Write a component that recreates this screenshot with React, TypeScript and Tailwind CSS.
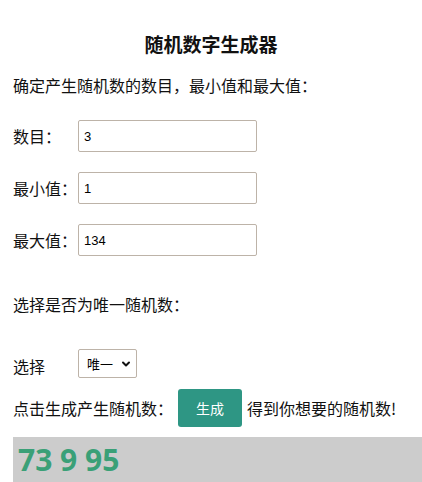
import { ChevronDown } from 'lucide-react';

const fields = [
  { label: '数目：', value: '3' },
  { label: '最小值：', value: '1' },
  { label: '最大值：', value: '134' },
];

export default function App() {
  return (
    <div className="min-h-[482px] overflow-hidden bg-white px-[13px] text-[16px] text-[#111] [font-family:'Noto_Sans_CJK_SC',sans-serif]">
      {/* 标题 */}
      <h2 className="pt-[33px] text-center text-[19px] font-bold leading-[22px]">随机数字生成器</h2>

      <p className="mt-[19px] leading-[22px]">确定产生随机数的数目，最小值和最大值：</p>

      {/* 输入框 */}
      <div className="mt-[24px] flex flex-col gap-[20px]">
        {fields.map((f) => (
          <div key={f.label} className="flex items-center">
            <span className="w-[65px] leading-[22px]">{f.label}</span>
            <input
              defaultValue={f.value}
              className="h-[32px] w-[179px] rounded-[2px] border border-[#bdb3a8] px-[5px] text-[13px] text-black outline-none [font-family:'Liberation_Sans',sans-serif]"
            />
          </div>
        ))}
      </div>

      <p className="mt-[37px] leading-[22px]">选择是否为唯一随机数：</p>

      {/* 选择 */}
      <div className="mt-[34px] flex items-center">
        <span className="w-[65px] pt-[4px] leading-[22px]">选择</span>
        <div className="relative h-[29px] w-[59px]">
          <select className="h-full w-full appearance-none rounded-[2px] border border-[#bdb3a8] bg-white pl-[8px] text-[13px] text-black outline-none">
            <option>唯一</option>
            <option>不唯一</option>
          </select>
          <ChevronDown className="pointer-events-none absolute right-[5px] top-[9px] h-[12px] w-[12px]" strokeWidth={4} />
        </div>
      </div>

      {/* 生成按钮 */}
      <div className="mt-[11px] flex items-center">
        <span className="w-[165px] leading-[22px]">点击生成产生随机数：</span>
        <button className="h-[38px] w-[64px] rounded-[3px] bg-[#2e9684] text-[14px] text-white">生成</button>
        <span className="ml-[5px] leading-[22px]">得到你想要的随机数!</span>
      </div>

      {/* 结果 */}
      <div className="mr-[-13px] mt-[10px] h-[52px] bg-[#cccccc] pl-[5px] pt-[3px]">
        <span className="text-[30px] font-bold leading-[40px] text-[#3aa077] [font-family:'Open_Sans',sans-serif]">73 9 95</span>
      </div>
    </div>
  );
}
